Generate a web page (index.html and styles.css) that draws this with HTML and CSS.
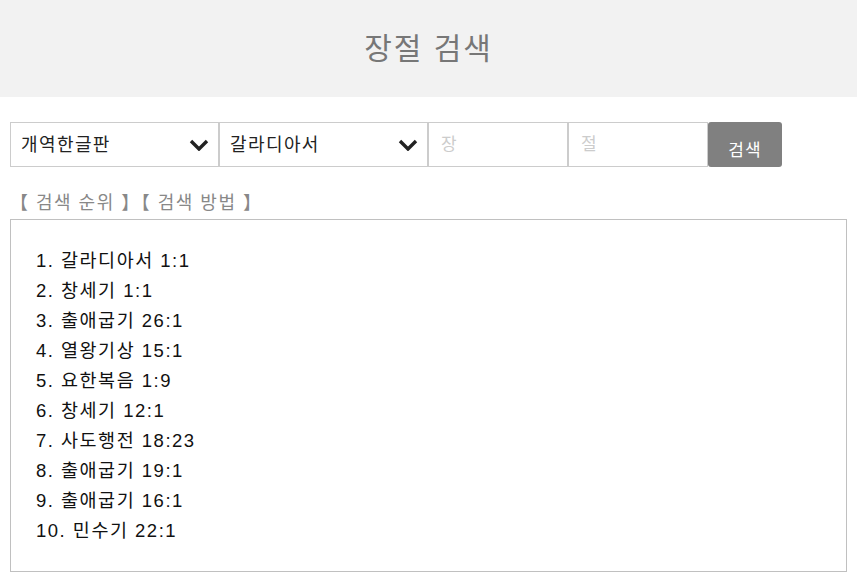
FILE: index.html
```html
<!DOCTYPE html>
<html lang="ko">
<head>
    <meta charset="UTF-8">
    <meta name="viewport" content="width=device-width, initial-scale=1.0">
    <title>장절 검색</title>
    <link rel="stylesheet" href="styles.css">
</head>
<body>
    <div class="header">
        <h1>장절 검색</h1>
    </div>

    <div class="content">
        <!-- 검색 폼 -->
        <form class="search-form" onsubmit="return false;">
            <div class="select-wrap">
                <select class="field select-field">
                    <option>개역한글판</option>
                </select>
                <svg class="chevron" width="20" height="12" viewBox="0 0 20 12"><path d="M2 2 L10 10 L18 2" fill="none" stroke="#222" stroke-width="3.4"/></svg>
            </div>
            <div class="select-wrap">
                <select class="field select-field">
                    <option>갈라디아서</option>
                </select>
                <svg class="chevron" width="20" height="12" viewBox="0 0 20 12"><path d="M2 2 L10 10 L18 2" fill="none" stroke="#222" stroke-width="3.4"/></svg>
            </div>
            <input class="field num-field" type="text" placeholder="장">
            <input class="field num-field" type="text" placeholder="절">
            <button class="btn">검색</button>
        </form>

        <div class="tabs">
            <span>【 검색 순위 】</span><span>【 검색 방법 】</span>
        </div>

        <div class="rank-box">
            <ol class="rank-list">
                <li>갈라디아서 1:1</li>
                <li>창세기 1:1</li>
                <li>출애굽기 26:1</li>
                <li>열왕기상 15:1</li>
                <li>요한복음 1:9</li>
                <li>창세기 12:1</li>
                <li>사도행전 18:23</li>
                <li>출애굽기 19:1</li>
                <li>출애굽기 16:1</li>
                <li>민수기 22:1</li>
            </ol>
        </div>
    </div>
</body>
</html>
```

FILE: styles.css
```css
body {
    margin: 0;
    font-family: "Liberation Sans", "Noto Sans CJK KR", sans-serif;
    background: #fff;
}
.header {
    background: #f2f2f2;
    height: 97px;
    box-sizing: border-box;
    padding-bottom: 6px;
    display: flex;
    align-items: center;
    justify-content: center;
}
.header h1 {
    margin: 0;
    font-size: 30px;
    font-weight: normal;
    letter-spacing: 2px;
    color: #777;
}
.content {
    padding: 25px 10px 0 10px;
}
.search-form {
    display: flex;
    height: 45px;
}
.select-wrap {
    position: relative;
    width: 209px;
}
.field {
    box-sizing: border-box;
    height: 45px;
    border: 1px solid #ccc;
    font-family: "Liberation Sans", "Noto Sans CJK KR", sans-serif;
    font-size: 18px;
    color: #222;
    background: #fff;
    margin: 0;
    outline: none;
}
.select-field {
    width: 100%;
    appearance: none;
    -webkit-appearance: none;
    border-radius: 0;
    padding: 0 0 0 10px;
    letter-spacing: 1.4px;
}
.chevron {
    position: absolute;
    right: 10px;
    top: 17px;
    pointer-events: none;
}
.num-field {
    width: 140px;
    padding: 0 12px;
    font-size: 17px;
}
.num-field::placeholder {
    color: #ccc;
}
.btn {
    width: 74px;
    height: 45px;
    background: #808080;
    color: #fff;
    border: none;
    border-radius: 3px;
    font-family: "Liberation Sans", "Noto Sans CJK KR", sans-serif;
    font-size: 17px;
    letter-spacing: 1px;
    padding: 8px 0 0 0;
    cursor: pointer;
}
.tabs {
    margin-top: 25px;
    font-size: 18px;
    letter-spacing: 1.5px;
    color: #888;
    line-height: 22px;
}
.rank-box {
    margin-top: 5px;
    border: 1px solid #c0c0c0;
    height: 351px;
}
.rank-list {
    list-style: decimal inside;
    margin: 0;
    padding: 26px 0 0 25px;
    font-size: 18.5px;
    letter-spacing: 1.5px;
    line-height: 30px;
    color: #111;
}
```
